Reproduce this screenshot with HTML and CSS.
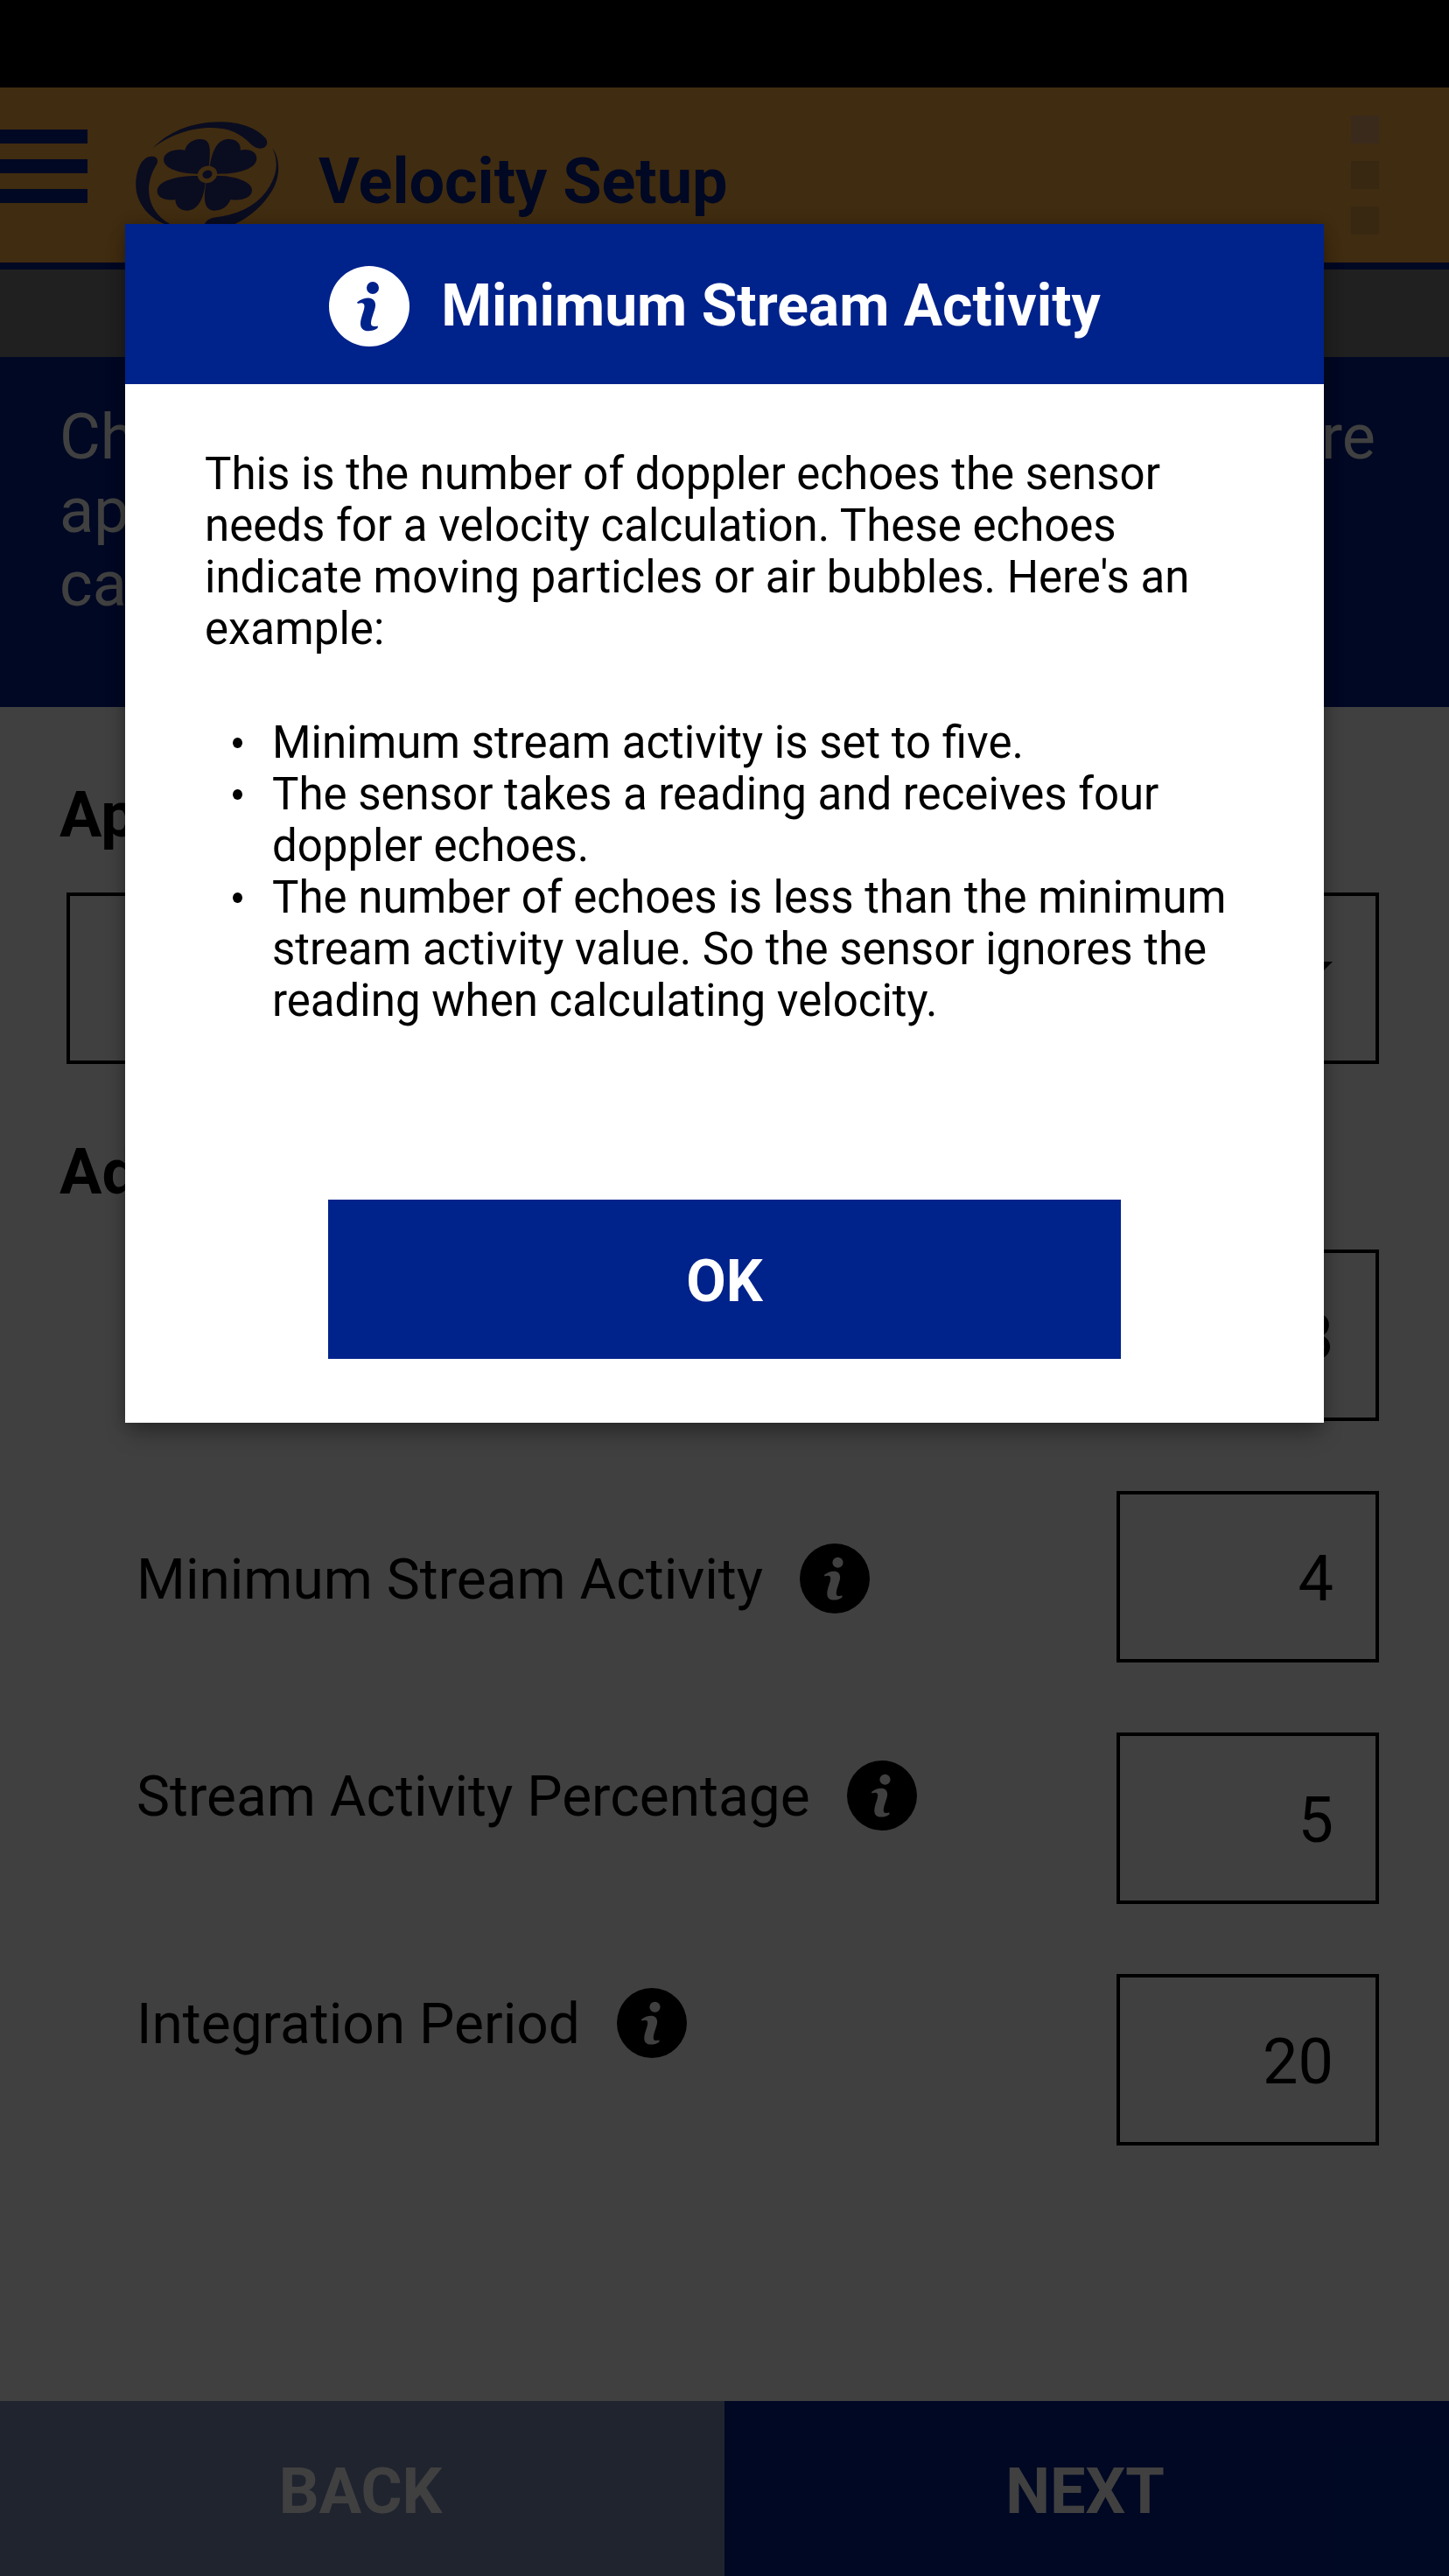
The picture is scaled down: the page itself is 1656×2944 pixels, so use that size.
FILE: index.html
```html
<!DOCTYPE html>
<html lang="en">
<head>
<meta charset="utf-8">
<meta name="viewport" content="width=device-width, initial-scale=1">
<title>Velocity Setup</title>
<link rel="stylesheet" href="styles.css">
</head>
<body>
<svg class="sprite" aria-hidden="true">
  <symbol id="info" viewBox="0 0 92 92">
    <path fill-rule="evenodd" d="M46 0a46 46 0 1 1 0 92a46 46 0 1 1 0-92ZM50 18a7 7 0 1 0 0 14a7 7 0 1 0 0-14ZM32 41.500C36 38 41 36.500 45 36.500C50 36.500 53.500 40 53 45.500C52.500 51 48 60 48 65.500C48 69.500 51.500 69.500 56 68.500L55.500 71C52.500 73.200 48.500 74.300 45 74.300C39 74.300 36 71 36 66C36 59 40.500 51 40.500 46C40.500 42 37.500 41.500 33 43Z"/>
  </symbol>
</svg>
<div class="app">
  <div class="status-bar"></div>
  <header class="top-bar">
    <button class="menu" type="button" aria-label="Menu"><span></span><span></span><span></span></button>
    <svg class="logo" viewBox="18 12 504 384" aria-hidden="true">
      <path d="M80 118C130 65 210 28 310 28C390 28 440 55 467 84C483 110 455 128 430 114C405 100 385 60 310 50C230 40 140 70 80 118Z"/>
      <path d="M94 172C102 150 85 145 70 147C40 150 20 200 22 250C24 310 75 370 140 384L150 384C100 360 68 320 66 262C66 225 80 195 94 172Z"/>
      <path d="M490 118C515 150 520 210 490 262C450 330 380 384 300 396L258 396C252 370 270 358 300 354C380 345 445 310 480 250C510 200 508 155 490 118Z"/>
      <path d="M273 180C278 120 280 87 243 87C215 87 195 104 190 125C165 118 117 128 117 157C117 190 180 208 240 206Z"/>
      <path d="M275 180C283 130 300 87 340 87C368 87 383 104 380 125C410 118 436 130 436 153C436 190 370 207 300 206Z"/>
      <path d="M235 213C170 212 95 228 95 265C95 290 128 300 157 294C158 318 172 332 200 332C240 330 256 280 260 238Z"/>
      <path d="M300 212C370 214 420 235 420 262C420 288 385 300 347 294C335 318 320 332 290 332C250 330 256 280 262 238Z"/>
      <ellipse class="logo-ring" cx="267" cy="208" rx="34" ry="29" transform="rotate(-15 267 208)"/>
      <ellipse cx="267" cy="208" rx="17" ry="14" transform="rotate(-20 267 208)"/>
    </svg>
    <h1>Velocity Setup</h1>
    <button class="more" type="button" aria-label="More"><span></span><span></span><span></span></button>
  </header>
  <div class="progress"></div>
  <p class="banner"><span>Choose the settings for your application before</span> applying them to the velocity<br>calibration.</p>
  <main class="form">
    <h2><label for="application">Application</label></h2>
    <div class="select"><select id="application"><option></option></select></div>
    <h2>Advanced</h2>
    <div class="settings">
      <div class="names">
        <div class="name"></div>
        <div class="name"><label for="activity">Minimum Stream Activity</label><button type="button" aria-label="About Minimum Stream Activity"><svg><use href="#info"/></svg></button></div>
        <div class="name"><label for="percentage">Stream Activity Percentage</label><button type="button" aria-label="About Stream Activity Percentage"><svg><use href="#info"/></svg></button></div>
        <div class="name"><label for="period">Integration Period</label><button type="button" aria-label="About Integration Period"><svg><use href="#info"/></svg></button></div>
      </div>
      <div class="values">
        <input type="text" aria-label="Minimum velocity" value="8">
        <input type="text" id="activity" value="4">
        <input type="text" id="percentage" value="5">
        <input type="text" id="period" value="20">
      </div>
    </div>
  </main>
  <footer class="actions"><button type="button" class="back">BACK</button><button type="button" class="next">NEXT</button></footer>
</div>
<div class="overlay">
  <section class="dialog" role="dialog" aria-modal="true" aria-labelledby="dialog-title">
    <header class="dialog-head"><svg aria-hidden="true"><use href="#info"/></svg><h2 id="dialog-title">Minimum Stream Activity</h2></header>
    <div class="dialog-body">
      <p>This is the number of doppler echoes the sensor needs for a velocity calculation. These echoes indicate moving particles or air bubbles. Here's an example:</p>
      <ul>
        <li>Minimum stream activity is set to five.</li>
        <li>The sensor takes a reading and receives four doppler echoes.</li>
        <li>The number of echoes is less than the minimum stream activity value. So the sensor ignores the reading when calculating velocity.</li>
      </ul>
    </div>
    <button type="button" class="ok">OK</button>
  </section>
</div>
</body>
</html>
```
FILE: styles.css
```css
* { box-sizing: border-box; }
body { margin: 0; font-family: Roboto, "Liberation Sans", sans-serif; color: #000; background: #fff; }
h1, h2, p, ul { margin: 0; padding: 0; }
button { margin: 0; padding: 0; border: 0; background: none; color: inherit; font: inherit; }
.sprite { display: none; }

.app { position: relative; display: flex; flex-direction: column; min-height: 100vh; }
.status-bar { height: 100px; background: #000; }
.top-bar { display: flex; align-items: flex-start; height: 208px; background: #ffb042; border-bottom: 8px solid #00228b; color: #00228b; }
.menu { display: grid; grid-template-rows: 16px 16px 16px; gap: 18px; width: 100px; margin-top: 48px; }
.menu span { background: #00228b; }
.logo { width: 168px; height: 128px; margin: 34px 0 0 54px; fill: #2a3080; }
.logo .logo-ring { fill: #ffb042; }
.top-bar h1 { flex: 1; margin: 66px 0 0 42px; font-size: 72px; line-height: 84px; font-weight: 700; }
.more { display: grid; grid-template-rows: 32px 32px 32px; gap: 20px; width: 32px; margin: 32px 80px 0 0; }
.more span { background: #e0a048; }
.more span:first-child { background: #e8a870; border-radius: 2px; }
.progress { height: 100px; background: #808080; }
.banner { height: 400px; padding: 50px 84px 0 68px; background: #00228b; color: #fff; font-size: 72px; line-height: 84px; }
.banner span { display: block; text-align-last: justify; }

.form { flex: 1; padding: 80px; }
.form h2 { margin-left: -12px; font-size: 72px; line-height: 88px; font-weight: 700; }
.select { position: relative; height: 196px; margin: 44px 0 80px -4px; border: 4px solid #000; }
.select select { width: 100%; height: 100%; border: 0; background: none; appearance: none; }
.select::after { content: ""; position: absolute; right: 49px; top: 75px; border: 20px solid transparent; border-top-color: #000; border-bottom: 0; }
.settings { display: flex; justify-content: space-between; margin-top: 44px; padding-left: 76px; }
.names { display: grid; grid-template-rows: 276px 248px 260px 80px; margin-top: 60px; }
.name { display: flex; align-items: flex-start; gap: 42px; font-size: 64px; line-height: 84px; }
.name button, .name svg { display: block; width: 80px; height: 80px; }
.values { display: grid; gap: 80px; width: 300px; }
.values input { width: 100%; height: 196px; padding: 4px 48px 0 0; border: 4px solid #000; border-radius: 0; background: none; color: #000; font: 72px Roboto, "Liberation Sans", sans-serif; text-align: right; }

.actions { display: grid; grid-template-columns: 1fr 1fr; height: 200px; color: #fff; font-size: 72px; font-weight: 700; }
.actions button { padding: 6px 4px 0 0; }
.back { background: #8090bc; }
.next { background: #00228b; }

.overlay { position: absolute; inset: 0; padding: 256px 143px; background: rgba(0, 0, 0, .75); }
.dialog { display: flex; flex-direction: column; height: 1370px; background: #fff; box-shadow: 0 16px 24px -4px rgba(0, 0, 0, .3), 0 0 16px rgba(0, 0, 0, .2); }
.dialog-head { display: flex; align-items: center; justify-content: center; gap: 36px; height: 183px; padding: 4px 22px 0 0; background: #00228b; color: #fff; }
.dialog-head svg { width: 92px; height: 92px; fill: #fff; }
.dialog-head h2 { font-size: 66px; line-height: 80px; font-weight: 700; }
.dialog-body { flex: 1; padding: 73px 91px 0; font-size: 51px; line-height: 59px; }
.dialog-body ul { margin-top: 71px; list-style: none; }
.dialog-body li { position: relative; padding-left: 77px; }
.dialog-body li::before { content: ""; position: absolute; left: 32px; top: 24px; width: 11px; height: 12px; border-radius: 50%; background: #000; }
.ok { align-self: center; width: 906px; height: 182px; margin-bottom: 73px; padding-top: 4px; background: #00228b; color: #fff; font-size: 66px; font-weight: 700; }
```
